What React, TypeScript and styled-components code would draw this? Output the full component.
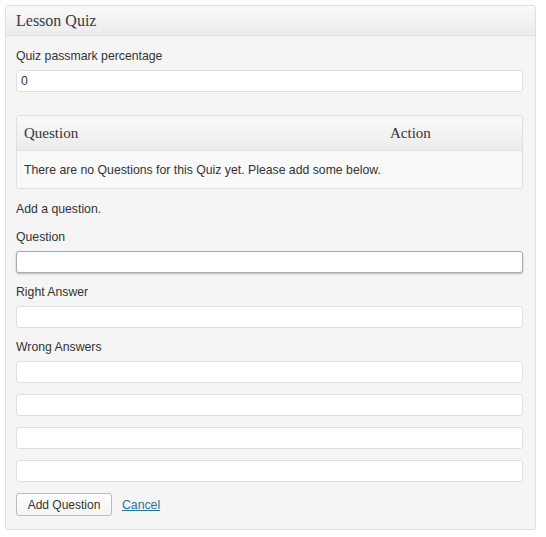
import React from "react";
import styled, { createGlobalStyle } from "styled-components";

const Global = createGlobalStyle`
  html, body { margin: 0; padding: 0; background: #ffffff; }
  body { font-family: "Liberation Sans", Arial, sans-serif; color: #333333; }
  * { box-sizing: border-box; }
`;

const Panel = styled.div`
  margin: 5px 0 0 5px;
  width: 531px;
  border: 1px solid #dfdfdf;
  border-radius: 3px;
  background: #f5f5f5;
  box-shadow: 0 1px 0 #ffffff inset;
`;

const PanelHeader = styled.div`
  height: 30px;
  padding: 0 10px;
  display: flex;
  align-items: center;
  border-bottom: 1px solid #dfdfdf;
  background: linear-gradient(to bottom, #f9f9f9, #ececec);
  font-family: "Liberation Serif", Georgia, serif;
  font-size: 16px;
  color: #3a3a3a;
  border-radius: 3px 3px 0 0;
`;

const PanelBody = styled.div`
  padding: 11px 12px 13px 10px;
  display: flex;
  flex-direction: column;
`;

const Label = styled.div<{ $mt?: number; $mb?: number }>`
  font-size: 12.25px;
  line-height: 18px;
  margin-top: ${(p) => p.$mt ?? 0}px;
  margin-bottom: ${(p) => p.$mb ?? 5}px;
  color: #333;
`;

const TextInput = styled.input<{ $focus?: boolean; $mt?: number }>`
  display: block;
  width: 100%;
  height: 22px;
  margin: ${(p) => p.$mt ?? 0}px 0 0 0;
  padding: 0 4px;
  border: 1px solid ${(p) => (p.$focus ? "#aaaaaa" : "#dfdfdf")};
  border-radius: 3px;
  background: #ffffff;
  font-family: "Liberation Sans", Arial, sans-serif;
  font-size: 12.25px;
  color: #333;
  outline: none;
  box-shadow: ${(p) => (p.$focus ? "0 1px 2px rgba(0,0,0,0.25)" : "none")};
`;

const Table = styled.div`
  margin-top: 23px;
  border: 1px solid #dfdfdf;
  border-radius: 3px;
  background: #f9f9f9;
  overflow: hidden;
`;

const TableHead = styled.div`
  display: grid;
  grid-template-columns: 1fr 139px;
  height: 35px;
  align-items: center;
  border-bottom: 1px solid #dfdfdf;
  background: linear-gradient(to bottom, #f9f9f9, #ececec);
`;

const HeadCell = styled.div`
  padding: 0 7px;
  font-family: "Liberation Serif", Georgia, serif;
  font-size: 15px;
  color: #333;
`;

const TableRow = styled.div`
  height: 37px;
  display: flex;
  align-items: center;
  padding: 0 7px;
  font-size: 12.25px;
  color: #333;
  background: #f9f9f9;
`;

const Actions = styled.div`
  display: flex;
  align-items: center;
  gap: 10px;
  margin-top: 11px;
`;

const Button = styled.button`
  height: 23px;
  width: 96px;
  padding: 0 8px;
  border: 1px solid #bbbbbb;
  border-radius: 3px;
  background: linear-gradient(to bottom, #fefefe, #f4f4f4);
  font-family: "Liberation Sans", Arial, sans-serif;
  font-size: 12px;
  color: #333;
`;

const CancelLink = styled.a`
  font-size: 12.25px;
  color: #21759b;
  text-decoration: underline;
  cursor: pointer;
`;

export default function App() {
  return (
    <>
      <Global />
      <Panel>
        <PanelHeader>Lesson Quiz</PanelHeader>
        <PanelBody>
          <Label>Quiz passmark percentage</Label>
          <TextInput defaultValue="0" />
          <Table>
            <TableHead>
              <HeadCell>Question</HeadCell>
              <HeadCell>Action</HeadCell>
            </TableHead>
            <TableRow>There are no Questions for this Quiz yet. Please add some below.</TableRow>
          </Table>
          <Label $mt={11} $mb={10}>Add a question.</Label>
          <Label>Question</Label>
          <TextInput $focus />
          <Label $mt={10}>Right Answer</Label>
          <TextInput />
          <Label $mt={10}>Wrong Answers</Label>
          <TextInput />
          <TextInput $mt={11} />
          <TextInput $mt={11} />
          <TextInput $mt={11} />
          <Actions>
            <Button>Add Question</Button>
            <CancelLink>Cancel</CancelLink>
          </Actions>
        </PanelBody>
      </Panel>
    </>
  );
}
